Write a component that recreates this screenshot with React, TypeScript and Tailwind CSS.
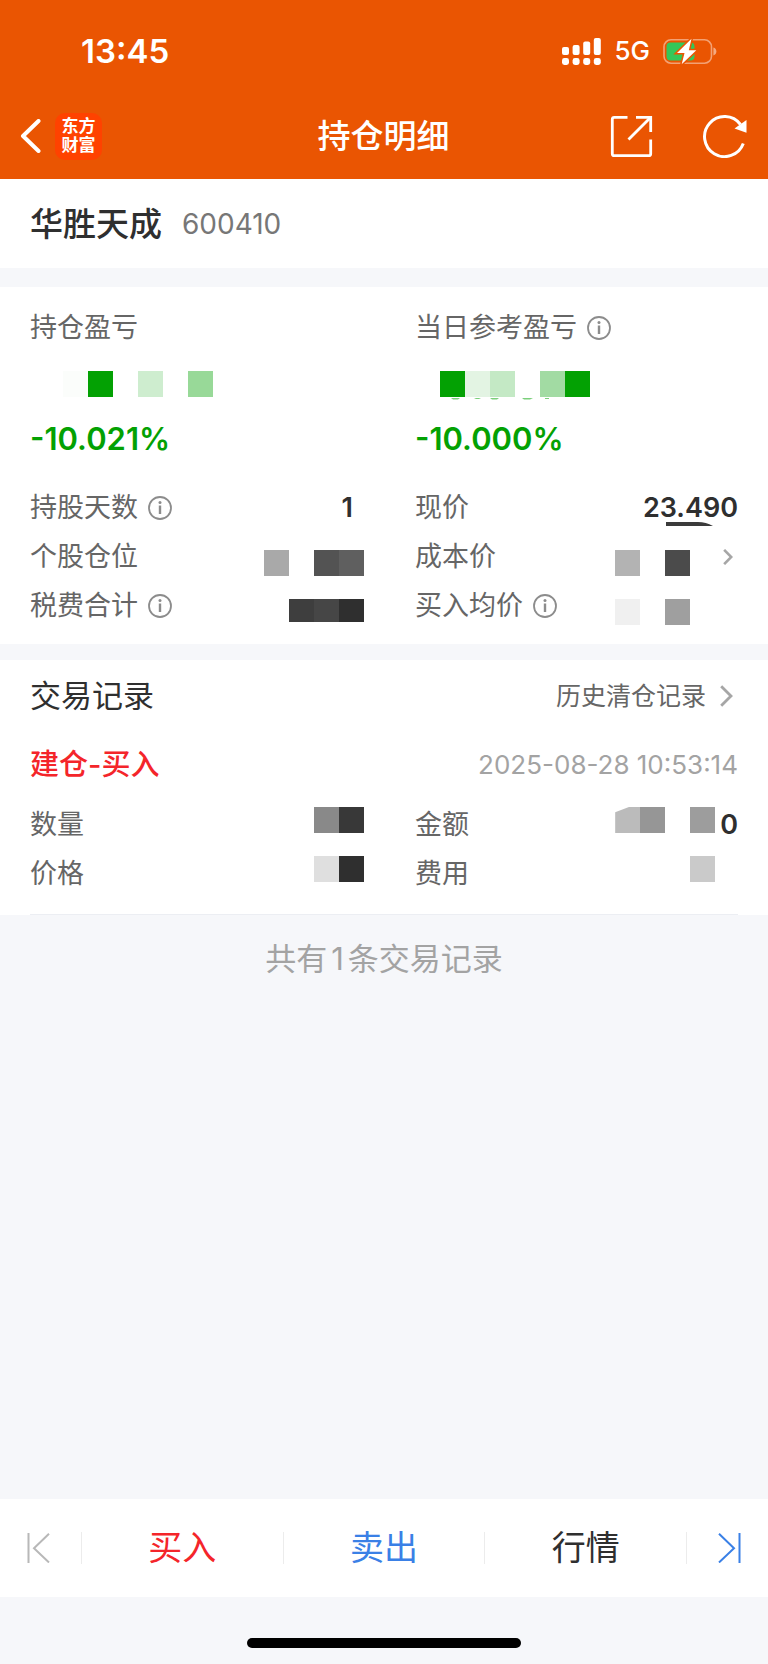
import type { ReactNode } from "react";

const GREEN = "text-[#03a103]";

function Mosaic({ cells, tall = true }: { cells: string[]; tall?: boolean }) {
  return (
    <div className={tall ? "flex h-[26px]" : "flex h-[23px]"} aria-hidden="true">
      {cells.map((color, i) => (
        <span key={i} className={`block h-full w-[25px] ${color}`} />
      ))}
    </div>
  );
}

function InfoButton({ label }: { label: string }) {
  return (
    <button type="button" aria-label={label} className="flex text-[#8c8c8c]">
      <svg width="24" height="24" viewBox="0 0 24 24" fill="none" stroke="currentColor">
        <circle cx="12" cy="12" r="11" strokeWidth="1.8" />
        <path d="M12 9.500v8.500" strokeWidth="2.4" />
        <circle cx="12" cy="6.4" r="1.5" fill="currentColor" stroke="none" />
      </svg>
    </button>
  );
}

function Label({ children, info = false }: { children: string; info?: boolean }) {
  return (
    <div className="flex items-center gap-[10px] text-[27px] leading-[49px] text-[#666]">
      <span>{children}</span>
      {info && <InfoButton label={`${children}说明`} />}
    </div>
  );
}

function Row({ label, info, children }: { label: string; info?: boolean; children?: ReactNode }) {
  return (
    <div className="flex h-[49px] justify-between">
      <Label info={info}>{label}</Label>
      {children}
    </div>
  );
}

function Chevron({ small = false }: { small?: boolean }) {
  return (
    <svg
      className={small ? "h-4 w-[10px]" : "h-[22px] w-[13px]"}
      viewBox="0 0 13 22"
      fill="none"
      stroke="#a6a6a6"
      strokeWidth={small ? 3.6 : 2.8}
    >
      <path d="M1.2 1.2 11 11 1.2 20.8" />
    </svg>
  );
}

function Header() {
  return (
    <header className="bg-[#ea5502] pb-[9px] text-white">
      <div className="flex h-[102px] items-center pl-[81px] pr-[51px]">
        <span className="text-[33px] font-semibold leading-10">13:45</span>
        <div className="ml-auto flex items-center gap-[13px]">
          <svg width="39" height="27" viewBox="0 0 39 27" fill="currentColor" aria-hidden="true">
            <rect x="0" y="9" width="7" height="8" rx="2" />
            <rect x="10.6" y="7" width="7" height="10" rx="2" />
            <rect x="21.2" y="3.5" width="7" height="13.5" rx="2" />
            <rect x="31.8" y="0" width="7" height="17" rx="2" />
            <rect x="0" y="20" width="7" height="7" rx="2.4" />
            <rect x="10.6" y="20" width="7" height="7" rx="2.4" />
            <rect x="21.2" y="20" width="7" height="7" rx="2.4" />
            <rect x="31.8" y="20" width="7" height="7" rx="2.4" />
          </svg>
          <span className="text-[26px] font-medium leading-8">5G</span>
          <svg width="54" height="27" viewBox="0 0 54 27" aria-hidden="true">
            <rect x="1" y="1.8" width="47.5" height="23.4" rx="7" fill="none" stroke="#fff" strokeOpacity=".45" strokeWidth="1.6" />
            <path d="M50.4 9.5v8c1.9-.6 3-2.200 3-4s-1.100-3.400-3-4z" fill="#fff" fillOpacity=".5" />
            <path d="M7.500 4.500H27.500a4 4 0 0 1 4 4v10a4 4 0 0 1-4 4H7.500a4 4 0 0 1-4-4v-10a4 4 0 0 1 4-4z" fill="#34c759" />
            <path d="M28.500.8 14 14.900h7.500L18.700 26.200 33.300 12.300h-7.500z" fill="#fff" stroke="#ea5502" strokeWidth="3" paintOrder="stroke" />
          </svg>
        </div>
      </div>
      <nav className="grid h-[68px] grid-cols-[1fr_auto_1fr] items-center pl-5 pr-[21px]">
        <div className="flex items-center gap-[14px]">
          <button type="button" aria-label="返回" className="flex">
            <svg width="21" height="34" viewBox="0 0 21 34" fill="none" stroke="currentColor" strokeWidth="4" strokeLinecap="round" strokeLinejoin="round">
              <path d="M18.500 2 3 17l15.500 15" />
            </svg>
          </button>
          <a
            href="#home"
            className="flex h-[47px] w-[47px] flex-col items-center justify-center rounded-[10px] bg-[#ff4200] text-[17px] font-bold leading-[19px]"
          >
            <span>东方</span>
            <span>财富</span>
          </a>
        </div>
        <h1 className="text-[33px] font-medium leading-10">持仓明细</h1>
        <div className="flex items-center justify-end gap-[50px]">
          <button type="button" aria-label="分享" className="flex">
            <svg width="43" height="43" viewBox="0 0 43 43" fill="none" stroke="currentColor" strokeWidth="2.8">
              <path d="M17.500 2.300H4.300a2 2 0 0 0-2 2v34.400a2 2 0 0 0 2 2h34.400a2 2 0 0 0 2-2V24.500" />
              <path d="M26 2.300h14.700V17" />
              <path d="M40 3 18.500 24.500" />
            </svg>
          </button>
          <button type="button" aria-label="刷新" className="flex">
            <svg width="44" height="44" viewBox="0 0 44 44" fill="none" stroke="currentColor" strokeWidth="3">
              <path d="M40.300 29.500A20 20 0 1 1 37.500 10.500" />
              <path d="M43.500 6v12.800L31.500 14.500z" fill="currentColor" stroke="none" />
            </svg>
          </button>
        </div>
      </nav>
    </header>
  );
}

const columns = "grid grid-cols-[334fr_323fr] gap-x-[51px]";
const masked = "pt-[18px]";
const maskedTop = "pt-[7px]";
const figure = "text-[27px] font-semibold leading-[49px] text-[#2f2f2f]";
const percent = `mt-[22px] text-[31px] font-semibold leading-10 ${GREEN}`;

function Position() {
  return (
    <section className="mt-[19px] bg-white px-[30px] pb-[14px] pt-4">
      <div className={columns}>
        <div>
          <Label>持仓盈亏</Label>
          <div className="pl-[33px] pt-[19px]">
            <Mosaic cells={["bg-[#fbfdfb]", "bg-[#03a103]", "", "bg-[#ceedcf]", "", "bg-[#98d998]"]} />
          </div>
          <p className={percent}>-10.021%</p>
        </div>
        <div>
          <Label info>当日参考盈亏</Label>
          <div className="relative pl-[25px] pt-[19px]">
            <Mosaic cells={["bg-[#03a103]", "bg-[#e3f4e3]", "bg-[#c4e9c5]", "", "bg-[#a2dba3]", "bg-[#03a103]"]} />
            <svg className="absolute left-[36px] top-full" width="150" height="3" viewBox="0 0 150 3" fill="#7bcf7b" aria-hidden="true">
              <path d="M0 1h9L7 2.500H2zM23 1h7l-2 1H25zM39 1h9l-2 1.500H41zM71 1h11l-3 1.500h-6zM94 1h4v1h-4z" />
            </svg>
          </div>
          <p className={percent}>-10.000%</p>
        </div>
      </div>
      <div className={`mt-6 ${columns}`}>
        <div>
          <Row label="持股天数" info>
            <span className={`pr-[11px] ${figure}`}>1</span>
          </Row>
          <Row label="个股仓位">
            <div className={masked}>
              <Mosaic cells={["bg-[#a9a9a9]", "", "bg-[#535353]", "bg-[#5f5f5f]"]} />
            </div>
          </Row>
          <Row label="税费合计" info>
            <div className={masked}>
              <Mosaic tall={false} cells={["bg-[#3e3e3e]", "bg-[#464646]", "bg-[#2f2f2f]"]} />
            </div>
          </Row>
        </div>
        <div>
          <Row label="现价">
            <span className={`relative ${figure}`}>
              23.490
              <svg className="absolute bottom-[6px] right-[25px]" width="47" height="4" viewBox="0 0 47 4" aria-hidden="true">
                <path d="M0 0h32q8 0 15 4H0z" fill="#3b3b3b" />
              </svg>
            </span>
          </Row>
          <Row label="成本价">
            <a href="#cost" aria-label="成本价详情" className="flex gap-[33px] pr-[5px]">
              <div className={masked}>
                <Mosaic cells={["bg-[#b3b3b3]", "", "bg-[#4b4b4b]"]} />
              </div>
              <span className="flex items-center">
                <Chevron small />
              </span>
            </a>
          </Row>
          <Row label="买入均价" info>
            <div className={`pr-12 ${masked}`}>
              <Mosaic cells={["bg-[#f0f0f0]", "", "bg-[#9f9f9f]"]} />
            </div>
          </Row>
        </div>
      </div>
    </section>
  );
}

function Trades() {
  return (
    <section className="mt-4 bg-white px-[30px] pt-4">
      <div className="flex items-center justify-between pr-[5px]">
        <h2 className="text-[31px] leading-10 text-[#2f2f2f]">交易记录</h2>
        <a href="#history" className="flex items-center gap-[14px] text-[25px] leading-10 text-[#666]">
          历史清仓记录
          <Chevron />
        </a>
      </div>
      <div className="mt-[29px] flex items-center justify-between leading-10">
        <h3 className="text-[29px] font-medium text-[#f4252a]">建仓-买入</h3>
        <time className="text-[26px] text-[#a3a3a3]">2025-08-28 10:53:14</time>
      </div>
      <div className={`mt-[15px] border-b border-[#eceef3] pb-4 ${columns}`}>
        <div>
          <Row label="数量">
            <div className={maskedTop}>
              <Mosaic cells={["bg-[#898989]", "bg-[#383838]"]} />
            </div>
          </Row>
          <Row label="价格">
            <div className={maskedTop}>
              <Mosaic cells={["bg-[#dfdfdf]", "bg-[#2f2f2f]"]} />
            </div>
          </Row>
        </div>
        <div>
          <Row label="金额">
            <div className="flex gap-[5px]">
              <div className={maskedTop}>
                <Mosaic
                  cells={["bg-[#bbbbbb] [clip-path:polygon(0_20%,55%_0,100%_0,100%_100%,0_100%)]", "bg-[#969696]", "", "bg-[#9d9d9d]"]}
                />
              </div>
              <span className={figure}>0</span>
            </div>
          </Row>
          <Row label="费用">
            <div className={`pr-[23px] ${maskedTop}`}>
              <Mosaic cells={["bg-[#cacaca]"]} />
            </div>
          </Row>
        </div>
      </div>
    </section>
  );
}

function BottomBar() {
  const tab = "flex-1 text-[34px] leading-[50px]";
  const rule = "h-8 w-px bg-[#ececec]";
  return (
    <footer className="mt-auto">
      <nav className="flex h-[98px] items-center bg-white">
        <button type="button" aria-label="上一只" className="flex w-[81px] pl-[27px] text-[#b8b8b8]">
          <svg width="23" height="30" viewBox="0 0 23 30" fill="none" stroke="currentColor" strokeWidth="2">
            <path d="M1.500 0v30M22 .8 7 15.300 22 29.500" />
          </svg>
        </button>
        <span className={rule} />
        <button type="button" className={`${tab} text-[#f4252a]`}>买入</button>
        <span className={rule} />
        <button type="button" className={`${tab} text-[#3a80e6]`}>卖出</button>
        <span className={rule} />
        <button type="button" className={`${tab} text-[#2f2f2f]`}>行情</button>
        <span className={rule} />
        <button type="button" aria-label="下一只" className="flex w-[81px] justify-end pr-[27px] text-[#3a80e6]">
          <svg width="23" height="30" viewBox="0 0 23 30" fill="none" stroke="currentColor" strokeWidth="2">
            <path d="M21.500 0v30M1 .8 16 15.300 1 29.500" />
          </svg>
        </button>
      </nav>
      <div className="flex h-[67px] items-end justify-center pb-4">
        <span className="h-[10px] w-[274px] rounded-full bg-black" />
      </div>
    </footer>
  );
}

export default function App() {
  return (
    <div className="flex min-h-screen flex-col bg-[#f6f7fa] font-[Inter,'Noto_Sans_CJK_SC',sans-serif]" lang="zh-CN">
      <Header />
      <main>
        <section className="flex items-center gap-5 bg-white px-[30px] pb-5 pt-[21px] leading-[48px]">
          <h2 className="text-[33px] font-medium text-[#2f2f2f]">华胜天成</h2>
          <span className="text-[28px] text-[#777]">600410</span>
        </section>
        <Position />
        <Trades />
        <p className="pt-[19px] text-center text-[31px] leading-[50px] text-[#a3a3a3]">
          共有<span className="mx-1">1</span>条交易记录
        </p>
      </main>
      <BottomBar />
    </div>
  );
}
